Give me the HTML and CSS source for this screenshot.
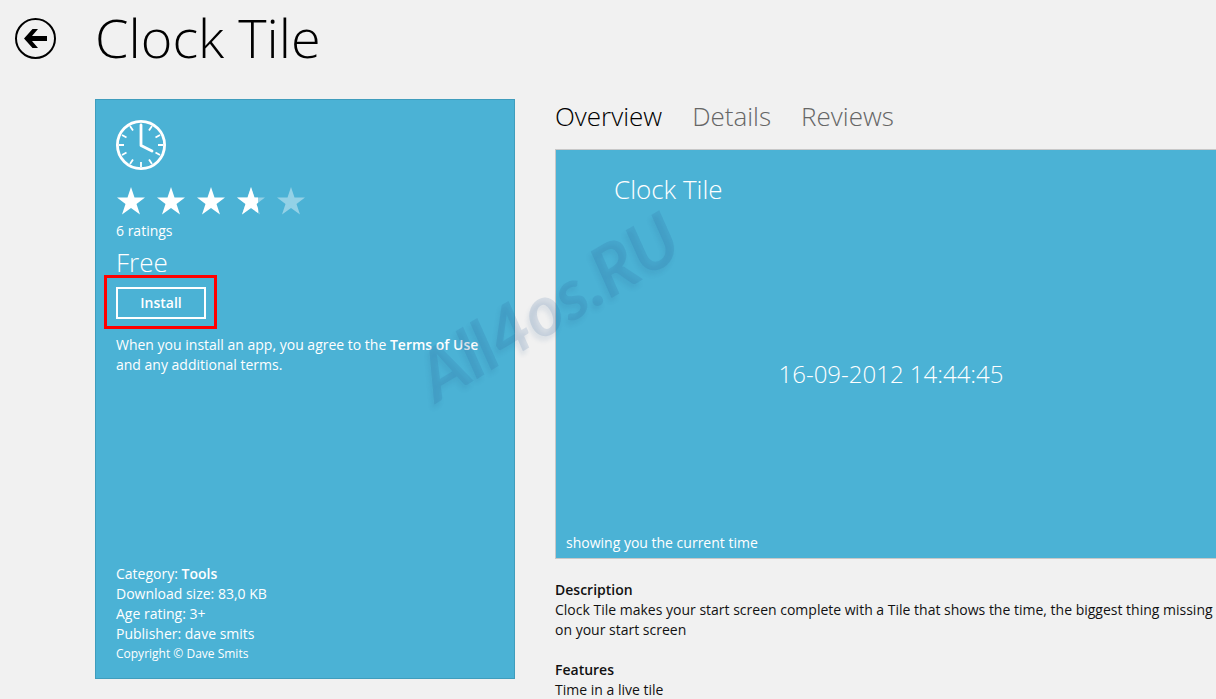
FILE: index.html
```html
<!DOCTYPE html>
<html lang="en">
<head>
  <meta charset="UTF-8" />
  <meta name="viewport" content="width=device-width, initial-scale=1.0"/>
  <title>Clock Tile</title>
  <link rel="stylesheet" href="styles.css">
</head>
<body>
  <header>
    <button class="back" type="button" aria-label="Back">
      <svg width="42" height="42" viewBox="0 0 42 42">
        <circle cx="21.500" cy="20.500" r="19.500" fill="none" stroke="#000" stroke-width="2"/>
        <path d="M10 20.500 18.500 11H24L18 18H33V23H18L24 30H18.500Z"/>
      </svg>
    </button>
    <h1>Clock Tile</h1>
  </header>

  <main>
    <section class="app-card">
      <svg class="clock" width="50" height="50" viewBox="0 0 50 50" fill="none" stroke="#fff">
        <circle cx="25" cy="25" r="23.600" stroke-width="2.800"/>
        <path stroke-width="2.800" stroke-linejoin="round" stroke-linecap="round" d="M25 5V25.500L36 31"/>
        <g stroke-width="1.800">
          <path d="M25 42V47M3 25H8M42 25H47"/>
          <path d="M14 6 17 10.500M36 6 33 10.500M14 44 17 39.500M36 44 33 39.500"/>
          <path d="M6 15 10.500 17.500M44 15 39.500 17.500M6 35 10.500 32.500M44 35 39.500 32.500"/>
        </g>
      </svg>

      <svg class="stars" width="190" height="28" viewBox="0 0 190 28" role="img" aria-label="3.8 out of 5 stars">
        <defs>
          <path id="star" d="M15 0 18.500 10.500H29L20.500 17 24 27.500 15 21 6 27.500 9.500 17 1 10.500H11.500Z"/>
          <clipPath id="part"><rect width="22" height="28"/></clipPath>
        </defs>
        <g fill="#fff">
          <use href="#star"/>
          <use href="#star" x="40"/>
          <use href="#star" x="80"/>
          <use href="#star" x="120" opacity=".4"/>
          <g transform="translate(120 0)"><use href="#star" clip-path="url(#part)"/></g>
          <use href="#star" x="160" opacity=".4"/>
        </g>
      </svg>
      <p>6 ratings</p>
      <p class="price">Free</p>
      <div class="highlight">
        <button class="install" type="button">Install</button>
      </div>
      <p class="terms">When you install an app, you agree to the <a href="#">Terms of Use</a> and any additional terms.</p>

      <div class="info">
        <p>Category: <strong>Tools</strong></p>
        <p>Download size: 83,0 KB</p>
        <p>Age rating: 3+</p>
        <p>Publisher: dave smits</p>
        <p class="copyright">Copyright © Dave Smits</p>
      </div>
    </section>

    <section class="overview">
      <nav>
        <a class="active" href="#">Overview</a>
        <a href="#">Details</a>
        <a href="#">Reviews</a>
      </nav>
      <div class="preview">
        <h2>Clock Tile</h2>
        <p class="time">16-09-2012 14:44:45</p>
        <p class="caption">showing you the current time</p>
      </div>
      <div class="about">
        <h3>Description</h3>
        <p>Clock Tile makes your start screen complete with a Tile that shows the time, the biggest thing missing on your start screen</p>
        <h3>Features</h3>
        <p>Time in a live tile</p>
      </div>
    </section>

    <div class="watermark">All4os.RU</div>
  </main>
</body>
</html>
```

FILE: styles.css
```css
* {
  box-sizing: border-box;
}

body {
  font-family: "Open Sans", "Noto Sans", sans-serif;
  font-size: 14px;
  line-height: 20px;
  background: #f1f1f1;
  color: #111;
  margin: 0;
  overflow: hidden;
}

h1, h2, h3, p {
  margin: 0;
}

a {
  color: inherit;
  text-decoration: none;
}

button {
  background: none;
  border: none;
  padding: 0;
  color: inherit;
  font: inherit;
}

header {
  display: flex;
  align-items: center;
  gap: 39px;
  height: 99px;
  padding: 0 14px 22px;
}

.back,
.back svg {
  display: block;
}

h1 {
  font-size: 54px;
  font-weight: 300;
  line-height: 70px;
  padding-bottom: 3px;
  color: #000;
}

main {
  position: relative;
  display: flex;
  align-items: flex-start;
  gap: 40px;
  padding-left: 95px;
}

.app-card {
  display: flex;
  flex-direction: column;
  align-items: flex-start;
  flex: 0 0 420px;
  min-height: 580px;
  padding: 20px 20px 14px;
  background: #4bb2d5;
  border: 1px solid #3f9dbd;
  color: #fff;
}

.stars {
  margin: 17px 0 6px;
}

.price {
  font-size: 26px;
  font-weight: 300;
  line-height: 36px;
  margin-top: 3px;
}

/* red frame around the install button */
.highlight {
  border: 3px solid #f00;
  padding: 9px 8px 7px 9px;
  margin: -5px -12px 6px;
}

.install {
  display: block;
  width: 90px;
  height: 32px;
  border: 2px solid #fff;
  font-weight: 600;
}

.terms a,
.info strong {
  font-weight: 600;
}

.info {
  margin-top: auto;
}

.copyright {
  font-size: 12px;
}

.overview {
  flex: 0 0 672px;
}

nav {
  display: flex;
  gap: 30px;
  height: 50px;
  font-size: 26px;
  font-weight: 300;
  line-height: 34px;
  color: #666;
}

nav .active {
  color: #000;
}

.preview {
  display: flex;
  flex-direction: column;
  height: 410px;
  padding: 22px 10px 5px;
  background: #4bb2d5;
  border: 1px solid #c8c8c8;
  color: #fff;
}

.preview h2 {
  font-size: 26px;
  font-weight: 300;
  line-height: 34px;
  padding-left: 48px;
  margin-bottom: 8px;
}

.time {
  font-size: 24px;
  font-weight: 300;
  line-height: 36px;
  margin: auto;
}

.about {
  padding-top: 1px;
}

h3 {
  font-size: 14px;
  font-weight: 600;
  margin-top: 20px;
}

.watermark {
  position: absolute;
  left: 402px;
  top: 166px;
  font-family: Lato, sans-serif;
  font-size: 70px;
  font-style: italic;
  font-weight: 700;
  line-height: 80px;
  color: rgba(40, 90, 150, 0.14);
  text-shadow: -4px 3px 4px rgba(40, 90, 140, 0.1);
  transform: rotate(-31deg);
  pointer-events: none;
}
```
